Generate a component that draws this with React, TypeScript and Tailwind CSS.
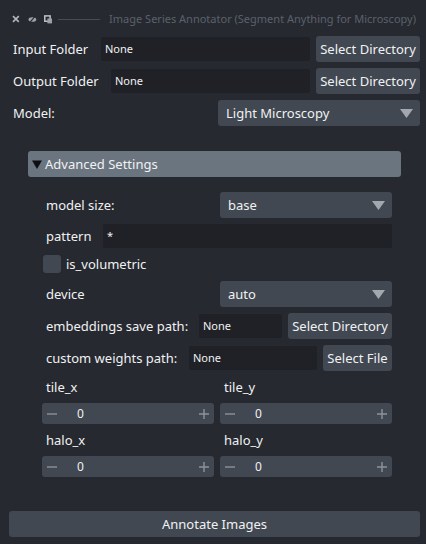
import React from "react"

const Arrow = () => (
  <svg width="13" height="9" viewBox="0 0 13 9" className="shrink-0">
    <path d="M0 0 H13 L6.5 9 Z" fill="#a3a8ae" />
  </svg>
)

const Combo = ({ value, className }: { value: string; className: string }) => (
  <div
    className={`h-[26px] rounded-[3px] bg-[#414851] flex items-center justify-between pl-[8px] pr-[7px] ${className}`}
  >
    <span>{value}</span>
    <Arrow />
  </div>
)

const Field = ({ className }: { className: string }) => (
  <div className={`h-[24px] rounded-[2px] bg-[#202127] flex items-center pl-[4px] text-[11px] ${className}`}>
    None
  </div>
)

const Button = ({ label, className }: { label: string; className: string }) => (
  <div
    className={`h-[26px] rounded-[3px] bg-[#414851] flex items-center justify-center whitespace-nowrap ${className}`}
  >
    {label}
  </div>
)

const Spin = () => (
  <div className="flex-1 h-[21px] rounded-[3px] bg-[#414851] flex items-center px-[4px] text-[12px]">
    <svg width="12" height="12" viewBox="0 0 12 12" className="shrink-0">
      <path d="M1 6 H11" stroke="#8d939a" strokeWidth="1.4" />
    </svg>
    <span className="ml-[19px] flex-1">0</span>
    <svg width="12" height="12" viewBox="0 0 12 12" className="shrink-0">
      <path d="M1 6 H11 M6 1 V11" stroke="#8d939a" strokeWidth="1.4" />
    </svg>
  </div>
)

export default function App() {
  return (
    <div className="w-[426px] h-[544px] bg-[#262930] text-[#f0f1f2] text-[13px] leading-[18px] overflow-hidden [font-family:'Noto_Sans',sans-serif]">
      {/* title bar */}
      <div className="h-[22px] mt-[8px] flex items-center pl-[12px] pr-[10px]">
        <svg width="8" height="8" viewBox="0 0 8 8">
          <path d="M1 1 L7 7 M7 1 L1 7" stroke="#b3b7bc" strokeWidth="1.6" />
        </svg>
        <svg width="9" height="7" viewBox="0 0 9 7" className="ml-[8px]">
          <ellipse cx="4.5" cy="3.5" rx="4" ry="2.4" fill="#9da2a8" />
          <path d="M2 6.5 L7 0.5" stroke="#262930" strokeWidth="1.1" />
        </svg>
        <svg width="9" height="9" viewBox="0 0 9 9" className="ml-[7px]">
          <rect x="0.8" y="0.8" width="5.5" height="5.5" fill="none" stroke="#c2c5c9" strokeWidth="1.5" />
          <rect x="3.5" y="3.5" width="5" height="5" fill="#9da2a8" />
        </svg>
        <div className="ml-[6px] w-[43px] h-px bg-[#474c55]" />
        <div className="ml-[9px] text-[11px] text-[#5b616b] whitespace-nowrap">
          Image Series Annotator (Segment Anything for Microscopy)
        </div>
      </div>

      <div className="ml-[9px] mr-[6px]">
        <div className="mt-[6px] flex items-center">
          <span className="pl-[4px] w-[92px] whitespace-nowrap">Input Folder</span>
          <Field className="w-[209px]" />
          <Button label="Select Directory" className="ml-[6px] w-[104px]" />
        </div>
        <div className="mt-[6px] flex items-center">
          <span className="pl-[4px] w-[102px] whitespace-nowrap">Output Folder</span>
          <Field className="w-[199px]" />
          <Button label="Select Directory" className="ml-[6px] w-[104px]" />
        </div>
        <div className="mt-[6px] flex items-center">
          <span className="pl-[4px] w-[209px]">Model:</span>
          <Combo value="Light Microscopy" className="w-[202px]" />
        </div>

        {/* advanced settings */}
        <div className="mt-[25px] ml-[19px] w-[373px] h-[26px] rounded-[3px] bg-[#6b7580] flex items-center pl-[4px]">
          <svg width="10" height="9" viewBox="0 0 10 9" className="mr-[3px]">
            <path d="M0 0.5 H10 L5 9 Z" fill="#0e0f12" />
          </svg>
          <span>Advanced Settings</span>
        </div>

        <div className="ml-[33px] w-[350px]">
          <div className="mt-[15px] flex items-center">
            <span className="pl-[4px] w-[178px]">model size:</span>
            <Combo value="base" className="flex-1" />
          </div>
          <div className="mt-[6px] flex items-center">
            <span className="pl-[4px] w-[61px]">pattern</span>
            <div className="flex-1 h-[24px] rounded-[2px] bg-[#202127] flex items-center pl-[4px] text-[11px]">
              *
            </div>
          </div>
          <div className="mt-[7px] flex items-center">
            <div className="ml-[1px] w-[18px] h-[18px] rounded-[3px] bg-[#414851]" />
            <span className="ml-[5px]">is_volumetric</span>
          </div>
          <div className="mt-[8px] flex items-center">
            <span className="pl-[4px] w-[178px]">device</span>
            <Combo value="auto" className="flex-1" />
          </div>
          <div className="mt-[6px] flex items-center">
            <span className="pl-[4px] w-[157px] whitespace-nowrap">embeddings save path:</span>
            <Field className="w-[83px]" />
            <Button label="Select Directory" className="ml-[6px] flex-1" />
          </div>
          <div className="mt-[6px] flex items-center">
            <span className="pl-[4px] w-[147px] whitespace-nowrap">custom weights path:</span>
            <Field className="w-[128px]" />
            <Button label="Select File" className="ml-[6px] flex-1" />
          </div>

          <div className="mt-[6px] grid grid-cols-2 gap-x-[6px]">
            <div>
              <div className="pl-[4px] h-[20px] leading-[20px]">tile_x</div>
              <div className="mt-[6px] flex">
                <Spin />
              </div>
            </div>
            <div>
              <div className="pl-[4px] h-[20px] leading-[20px]">tile_y</div>
              <div className="mt-[6px] flex">
                <Spin />
              </div>
            </div>
            <div className="mt-[6px]">
              <div className="pl-[4px] h-[20px] leading-[20px]">halo_x</div>
              <div className="mt-[6px] flex">
                <Spin />
              </div>
            </div>
            <div className="mt-[6px]">
              <div className="pl-[4px] h-[20px] leading-[20px]">halo_y</div>
              <div className="mt-[6px] flex">
                <Spin />
              </div>
            </div>
          </div>
        </div>

        <Button label="Annotate Images" className="mt-[34px] w-full" />
      </div>
    </div>
  )
}
